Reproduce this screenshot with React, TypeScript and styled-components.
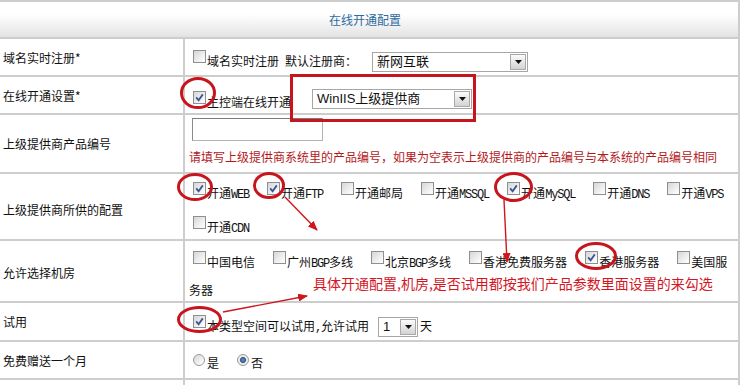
import styled, { createGlobalStyle } from 'styled-components';

const GlobalStyle = createGlobalStyle`
  html, body {
    margin: 0;
    padding: 0;
    background: #fff;
  }

  body {
    font-family: "Noto Sans CJK SC", "Noto Sans", sans-serif;
    font-size: 12px;
    color: #111;
  }
`;

const CheckBox = ({ checked }: { checked?: boolean }) => (
    <Box>
        {checked && (
            <svg width="11" height="11" viewBox="0 0 11 11">
                <path d="M2.2 5.4 L4.6 8.2 L8.8 2.4" fill="none" stroke="#3b5594" strokeWidth="1.8" />
            </svg>
        )}
    </Box>
);

const Select = ({ value, width }: { value: string; width: number }) => (
    <SelectBox $width={width}>
        <SelectValue>{value}</SelectValue>
        <SelectArrow>
            <svg width="7" height="4" viewBox="0 0 7 4">
                <path d="M0 0 H7 L3.5 4 Z" fill="#111" />
            </svg>
        </SelectArrow>
    </SelectBox>
);

const Option = ({ checked, children }: { checked?: boolean; children: React.ReactNode }) => (
    <>
        <CheckBox checked={checked} />
        <OptionText>{children}</OptionText>
    </>
);

const App = () => {
    return (
        <Page>
            <GlobalStyle />
            <Table>
                <Header>在线开通配置</Header>

                <Row $height={36}>
                    <Label>域名实时注册*</Label>
                    <Value $pt={11}>
                        <CheckBox />
                        <Text>域名实时注册<Spaced>默认注册商：</Spaced></Text>
                        <SelectSlot $ml={15}>
                            <Select value="新网互联" width={156} />
                        </SelectSlot>
                    </Value>
                </Row>

                <Row $height={36}>
                    <Label>在线开通设置*</Label>
                    <Value $pt={12}>
                        <CheckBox checked />
                        <Text>主控端在线开通</Text>
                        <SelectSlot $ml={21} $lift={4}>
                            <Select value="WinIIS上级提供商" width={160} />
                        </SelectSlot>
                    </Value>
                </Row>

                <Row $height={57}>
                    <Label>上级提供商产品编号</Label>
                    <Value $pt={3}>
                        <TextInput />
                        <Hint>请填写上级提供商系统里的产品编号，如果为空表示上级提供商的产品编号与本系统的产品编号相同</Hint>
                    </Value>
                </Row>

                <Row $height={65}>
                    <Label>上级提供商所供的配置</Label>
                    <Value $pt={3} $lh={32}>
                        <Option checked>开通<Latin>WEB</Latin></Option>
                        <Option checked>开通<Latin>FTP</Latin></Option>
                        <Option>开通邮局</Option>
                        <Option>开通<Latin>MSSQL</Latin></Option>
                        <Option checked>开通<Latin>MySQL</Latin></Option>
                        <Option>开通<Latin>DNS</Latin></Option>
                        <Option>开通<Latin>VPS</Latin></Option>
                        <Option>开通<Latin>CDN</Latin></Option>
                    </Value>
                </Row>

                <Row $height={60}>
                    <Label>允许选择机房</Label>
                    <Value $pt={8} $lh={26}>
                        <Option>中国电信</Option>
                        <Option>广州<Latin>BGP</Latin>多线</Option>
                        <Option>北京<Latin>BGP</Latin>多线</Option>
                        <Option>香港免费服务器</Option>
                        <Option checked>香港服务器</Option>
                        <Option>美国服务器</Option>
                    </Value>
                </Row>

                <Row $height={37}>
                    <Label>试用</Label>
                    <Value $pt={12}>
                        <CheckBox checked />
                        <Text>本类型空间可以试用<Latin>,</Latin>允许试用</Text>
                        <SelectSlot $ml={9}>
                            <Select value="1" width={40} />
                        </SelectSlot>
                        <Text $ml={2}>天</Text>
                    </Value>
                </Row>

                <Row $height={36}>
                    <Label>免费赠送一个月</Label>
                    <Value $pt={11}>
                        <Radio />
                        <OptionText>是</OptionText>
                        <Radio $checked />
                        <OptionText>否</OptionText>
                    </Value>
                </Row>

                <Row $height={20} $last>
                    <Label />
                    <Value />
                </Row>
            </Table>

            <Overlay>
                <svg width="741" height="385" viewBox="0 0 741 385">
                    <defs>
                        <marker id="head" markerWidth="10" markerHeight="8" refX="9" refY="4" orient="auto" markerUnits="userSpaceOnUse">
                            <path d="M0 0 L10 4 L0 8 Z" fill="#d0151c" />
                        </marker>
                    </defs>
                    <g fill="none" stroke="#c8141c" strokeWidth="3">
                        <rect x="291.5" y="75.5" width="183" height="45" />
                        <ellipse cx="198" cy="93" rx="16.5" ry="14.5" />
                        <ellipse cx="195" cy="187" rx="16.5" ry="12.5" />
                        <ellipse cx="269" cy="185.5" rx="14.5" ry="12" />
                        <ellipse cx="513.5" cy="187" rx="18" ry="13.5" />
                        <ellipse cx="596" cy="256" rx="19.5" ry="12.5" />
                        <ellipse cx="199.5" cy="319.5" rx="21" ry="12" />
                    </g>
                    <g stroke="#d0151c" strokeWidth="1.4" markerEnd="url(#head)">
                        <line x1="285" y1="197" x2="317" y2="230" />
                        <line x1="504" y1="200" x2="507" y2="262" />
                        <line x1="223" y1="312" x2="307" y2="296" />
                    </g>
                </svg>
                <Note>具体开通配置,机房,是否试用都按我们产品参数里面设置的来勾选</Note>
            </Overlay>
        </Page>
    );
};

const Page = styled.div`
  position: relative;
  width: 741px;
  height: 385px;
  overflow: hidden;
`;

const Table = styled.div`
  width: 738px;
  border-top: 2px solid #cdcdcd;
  border-right: 2px solid #cdcdcd;
`;

const Header = styled.div`
  height: 35px;
  display: flex;
  align-items: center;
  justify-content: center;
  padding-right: 8px;
  border-bottom: 2px solid #cdcdcd;
  background: linear-gradient(#ffffff 35%, #e3e3e3);
  color: #2e6aa1;
  font-size: 12px;
`;

const Row = styled.div<{ $height: number; $last?: boolean }>`
  display: grid;
  grid-template-columns: 185px 1fr;
  height: ${props => props.$height}px;
  border-bottom: ${props => props.$last ? 'none' : '2px solid #cdcdcd'};
`;

const Label = styled.div`
  display: flex;
  align-items: center;
  padding-left: 3px;
  border-right: 2px solid #cdcdcd;
  color: #111;
  font-size: 12px;
`;

const Value = styled.div<{ $pt?: number; $lh?: number }>`
  padding: ${props => props.$pt || 0}px 0 0 4px;
  line-height: ${props => props.$lh || 20}px;
  font-size: 12px;
  color: #111;
  overflow: visible;
`;

const Box = styled.span`
  display: inline-block;
  box-sizing: border-box;
  width: 13px;
  height: 13px;
  margin: 0 1px 0 4px;
  vertical-align: 3px;
  border: 1px solid #8e8f8f;
  background: linear-gradient(135deg, #d6d6d6, #f4f4f4 70%, #ffffff);
  line-height: 0;

  svg {
    display: block;
  }
`;

const Radio = styled.span<{ $checked?: boolean }>`
  display: inline-block;
  box-sizing: border-box;
  width: 12px;
  height: 12px;
  margin: 0 2px 0 4px;
  vertical-align: 2px;
  border-radius: 50%;
  border: 1px solid #9a9a9a;
  background: ${props => props.$checked
    ? 'radial-gradient(circle at 50% 50%, #6d9ccc 0, #2c5585 2.5px, #e8e8e8 3.5px, #fafafa)'
    : 'linear-gradient(135deg, #d4d4d4, #f6f6f6 70%, #ffffff)'};
`;

const OptionText = styled.span`
  margin-right: 14px;
`;

const Text = styled.span<{ $ml?: number }>`
  margin-left: ${props => props.$ml || 0}px;
`;

const Spaced = styled.span`
  margin-left: 6px;
`;

const Latin = styled.span`
  font-family: "Liberation Mono", monospace;
  font-size: 12px;
  letter-spacing: -1.2px;
`;

const SelectSlot = styled.span<{ $ml: number; $lift?: number }>`
  display: inline-block;
  margin-left: ${props => props.$ml}px;
  vertical-align: ${props => props.$lift || 0}px;
`;

const SelectBox = styled.span<{ $width: number }>`
  display: flex;
  align-items: center;
  box-sizing: border-box;
  width: ${props => props.$width}px;
  height: 20px;
  border: 1px solid #a6a6a6;
  background: #fff;
  font-family: "Liberation Sans", "Noto Sans CJK SC", sans-serif;
  font-size: 13px;
  line-height: 18px;
  color: #111;
`;

const SelectValue = styled.span`
  flex: 1;
  padding-left: 4px;
  white-space: nowrap;
  overflow: hidden;
`;

const SelectArrow = styled.span`
  display: flex;
  align-items: center;
  justify-content: center;
  box-sizing: border-box;
  width: 16px;
  height: 16px;
  margin-right: 1px;
  border: 1px solid #a9a9a9;
  background: linear-gradient(#fbfbfb, #d3d3d3);
`;

const TextInput = styled.span`
  display: block;
  box-sizing: border-box;
  width: 131px;
  height: 23px;
  margin-left: 3px;
  border: 1px solid #b4b4b4;
  border-top-color: #7c7c7c;
  border-left-color: #8a8a8a;
  background: #fff;
`;

const Hint = styled.div`
  margin-top: 6px;
  color: #b3191c;
  font-size: 12px;
  white-space: nowrap;
`;

const Overlay = styled.div`
  position: absolute;
  inset: 0;
  pointer-events: none;

  svg {
    position: absolute;
    left: 0;
    top: 0;
  }
`;

const Note = styled.div`
  position: absolute;
  left: 313px;
  top: 274px;
  color: #d3161f;
  font-size: 14px;
  line-height: 18px;
  white-space: nowrap;
`;

export default App;
